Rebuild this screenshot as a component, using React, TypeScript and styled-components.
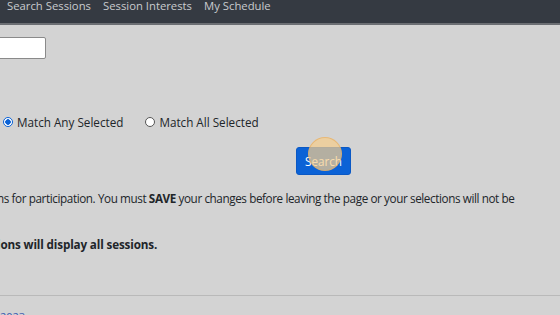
import React from "react";
import styled, { createGlobalStyle } from "styled-components";

const GlobalStyle = createGlobalStyle`
  html, body {
    margin: 0;
    padding: 0;
    background: #d3d3d3;
    font-family: "Segoe UI", "Open Sans", "Noto Sans", sans-serif;
    color: #212529;
    overflow: hidden;
  }
`;

export default function App() {
  return (
    <Page>
      <GlobalStyle />
      <NavBar>
        <NavLink>Search Sessions</NavLink>
        <NavLink>Session Interests</NavLink>
        <NavLink>My Schedule</NavLink>
      </NavBar>
      <Main>
        <TextBox type="text" />
        <RadioRow>
          <RadioLabel>
            <Radio checked />
            Match Any Selected
          </RadioLabel>
          <RadioLabel>
            <Radio />
            Match All Selected
          </RadioLabel>
        </RadioRow>
        <ButtonRow>
          <SearchButton>
            Search
            <ClickMark />
          </SearchButton>
        </ButtonRow>
        <Note>
          ns for participation. You must <b>SAVE</b> your changes before leaving the page or your selections will not be
        </Note>
        <Note bold>ions will display all sessions.</Note>
      </Main>
      <Footer>
        <FooterLink>2023 ... ...</FooterLink>
      </Footer>
    </Page>
  );
}

const Page = styled.div`
  width: 560px;
  height: 315px;
  overflow: hidden;
`;

const NavBar = styled.nav`
  height: 23px;
  background: #353a42;
  border-bottom: 2px solid #6b6e73;
  display: flex;
  align-items: center;
  gap: 12px;
  padding-left: 7px;
`;

const NavLink = styled.a`
  color: #c9cbce;
  font-size: 11.3px;
  line-height: 1.2;
  margin-top: -11px;
`;

const Main = styled.main`
  padding-top: 12px;
  height: 270px;
  box-sizing: border-box;
`;

const TextBox = styled.input`
  display: block;
  width: 60px;
  height: 22px;
  margin-left: -14px;
  box-sizing: border-box;
  border: 1px solid #8a8a8a;
  border-radius: 2px;
  background: #fff;
`;

const RadioRow = styled.div`
  display: flex;
  gap: 22px;
  margin-top: 55px;
  padding-left: 3px;
`;

const RadioLabel = styled.label`
  display: flex;
  align-items: center;
  gap: 4px;
  font-size: 11.7px;
`;

const Radio = styled.span<{ checked?: boolean }>`
  width: 10px;
  height: 10px;
  border-radius: 50%;
  box-sizing: border-box;
  border: 1px solid ${(p) => (p.checked ? "#0b62d6" : "#555")};
  background: ${(p) => (p.checked ? "radial-gradient(circle, #0b62d6 0 2.5px, #fff 3px)" : "#fff")};
`;

const ButtonRow = styled.div`
  padding-left: 296px;
  margin-top: 17px;
`;

const SearchButton = styled.button`
  position: relative;
  width: 55px;
  height: 28px;
  background: #0b62d6;
  border: 1px solid #0a58c4;
  border-radius: 3px;
  color: #fff;
  font-family: inherit;
  font-size: 11.7px;
  padding: 0;
`;

const ClickMark = styled.span`
  position: absolute;
  left: 11px;
  top: -11px;
  width: 34px;
  height: 34px;
  border-radius: 50%;
  background: rgba(245, 205, 140, 0.72);
  border: 1px solid rgba(230, 170, 90, 0.6);
  box-sizing: border-box;
`;

const Note = styled.p<{ bold?: boolean }>`
  margin: 0;
  margin-left: -3px;
  font-size: 11.7px;
  font-weight: ${(p) => (p.bold ? 700 : 400)};
  letter-spacing: ${(p) => (p.bold ? "-0.15px" : "-0.4px")};
  white-space: nowrap;
  margin-top: ${(p) => (p.bold ? "30px" : "15px")};
`;

const Footer = styled.footer`
  border-top: 1px solid #b9b9b9;
  height: 30px;
  padding-top: 15px;
  box-sizing: border-box;
  font-size: 11px;
  line-height: 1;
`;

const FooterLink = styled.a`
  color: #3b5bb0;
`;
